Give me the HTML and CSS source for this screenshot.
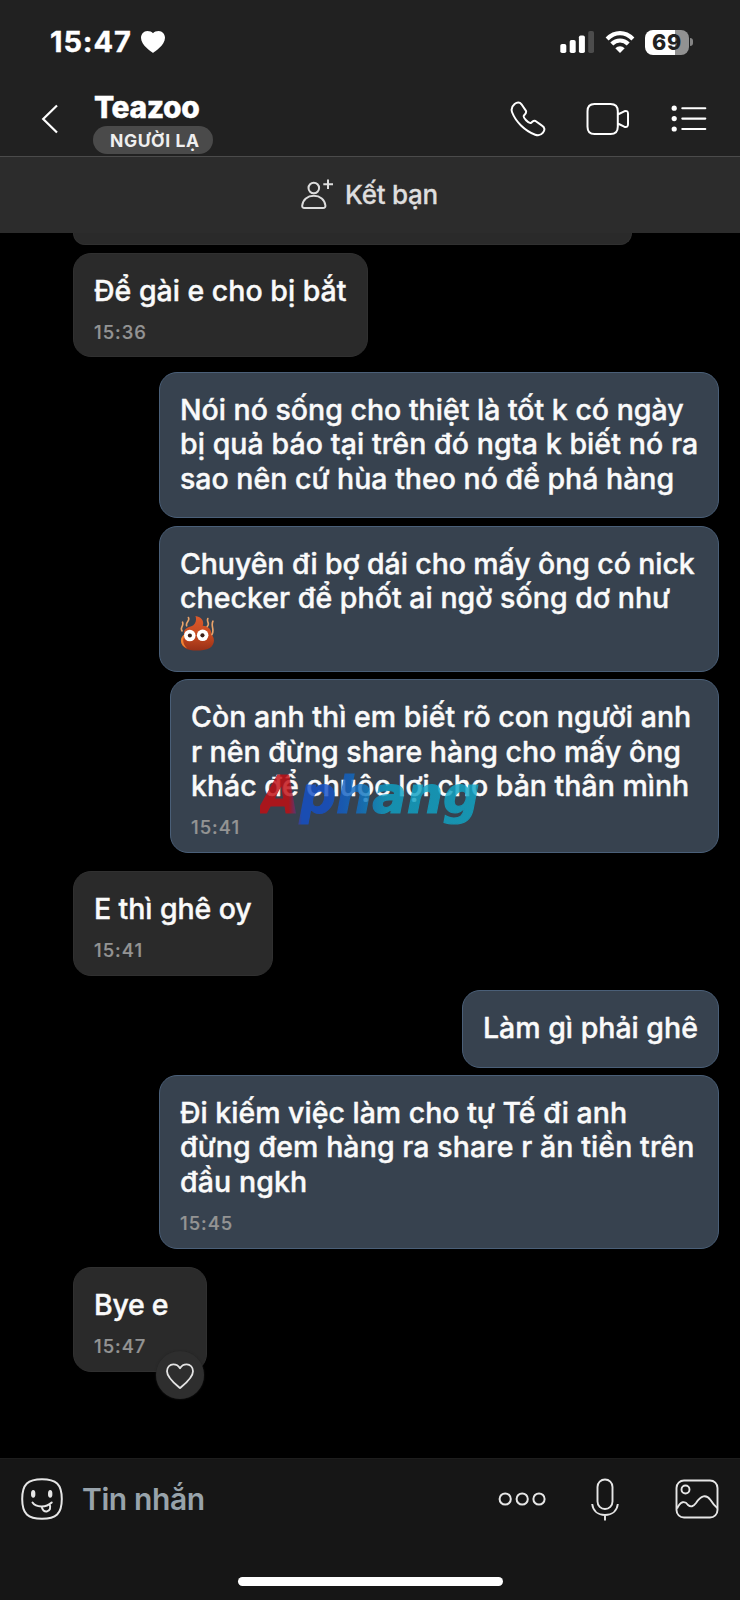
FILE: index.html
```html
<!DOCTYPE html>
<html lang="vi">
<head>
<meta charset="utf-8">
<title>Teazoo</title>
<link rel="stylesheet" href="styles.css">
</head>
<body>
<div class="screen">
  <header class="header">
    <div class="status">
      <span class="clock">15:47</span>
      <svg class="status-heart" width="26" height="24" viewBox="0 0 26 24"><path d="M13 23C11.800 22 1 15.500 1 7.800C1 4 3.800 1 7.300 1C9.700 1 11.900 1.700 13 3.300C14.100 1.700 16.300 1 18.700 1C22.200 1 25 4 25 7.800C25 15.500 14.200 22 13 23Z" fill="#fff"/></svg>
      <svg class="signal" width="34" height="22" viewBox="0 0 34 22"><g fill="#fff"><rect x="0.300" y="13" width="6" height="9" rx="1.800"/><rect x="9.700" y="9" width="6" height="13" rx="1.800"/><rect x="18.900" y="4.500" width="6" height="17.500" rx="1.800"/></g><rect x="28.200" y="0" width="5.800" height="22" rx="1.800" fill="#4c4c4c"/></svg>
      <svg class="wifi" width="30" height="22" viewBox="0 0 30 22"><g fill="none" stroke="#fff" stroke-width="4.200"><path d="M2.100 8Q8 2.200 15 2.200T27.900 8"/><path d="M6.800 13Q10.300 9.500 15 9.500T23.200 13"/></g><path d="M15 22L10.300 17.300Q12.400 15.200 15 15.200T19.700 17.300Z" fill="#fff"/></svg>
      <div class="battery"><span class="battery-box">69</span><span class="battery-cap"></span></div>
    </div>
    <div class="nav">
      <svg class="back" width="20" height="32" viewBox="0 0 20 32"><path d="M17 2.500L3.200 16L17 29.500" fill="none" stroke="#fff" stroke-width="2.200"/></svg>
      <div class="title">
        <h1 class="name">Teazoo</h1>
        <span class="tag">NGƯỜI LẠ</span>
      </div>
      <svg class="call" width="36" height="36" viewBox="0 0 36 36"><path d="M4.600 3C7 1.100 9.700 .9 11.500 3.300L15.800 9.600C17 11.500 15.500 12.800 14 14.400C12.400 16.100 18.800 23.300 21.100 21.800C22.800 20.700 23.300 19.100 25.500 20L32 24.600C35 26.500 35 29.300 33 31.700C30.800 34.400 28.600 35 25.200 33.700C14.500 29.600 5.700 20.500 2.200 11.500C.9 8.200 1.700 5.400 4.600 3Z" fill="none" stroke="#fff" stroke-width="2" stroke-linejoin="round"/></svg>
      <svg class="video" width="44" height="34" viewBox="0 0 44 34"><path d="M8.500 2H24.500Q31.800 2 31.800 9.300V24.700Q31.800 32 24.500 32H8.500Q1.500 32 1.500 24.700V9.300Q1.500 2 8.500 2ZM31.800 12.500L38.200 9.300Q42 8 42 11.800V22.200Q42 26 38.200 24.700L31.800 21.500" fill="none" stroke="#fff" stroke-width="2"/></svg>
      <svg class="menu" width="36" height="28" viewBox="0 0 36 28"><g fill="#fff"><circle cx="3.200" cy="3.200" r="2.600"/><circle cx="3.200" cy="13.600" r="2.600"/><circle cx="3.200" cy="24" r="2.600"/></g><path d="M11.300 3.200H34.300M11.300 13.600H34.300M11.300 24H34.300" stroke="#fff" stroke-width="2.100" stroke-linecap="round"/></svg>
    </div>
  </header>
  <div class="add-friend">
    <svg width="32" height="32" viewBox="0 0 32 32"><g fill="none" stroke="#ddd" stroke-width="2"><circle cx="12.800" cy="9" r="5.300"/><path d="M3.500 29Q1 29 1.200 26.500C1.800 20.500 6.500 16.800 12.800 16.800S23.800 20.500 24.400 26.500Q24.600 29 22 29Z"/><path d="M27 .5V10M22.300 5.200H32"/></g></svg>
    <span class="add-text">Kết bạn</span>
  </div>

  <main class="chat">
    <div class="bubble in cut"></div>
    <div class="bubble in b1"><p>Để gài e cho bị bắt</p><time>15:36</time></div>
    <div class="bubble out wide b2"><p>Nói nó sống cho thiệt là tốt k có ngày</p><p class="loose">bị quả báo tại trên đó ngta k biết nó ra</p><p>sao nên cứ hùa theo nó để phá hàng</p></div>
    <div class="bubble out wide b3"><p class="tight">Chuyên đi bợ dái cho mấy ông có nick</p><p class="slack">checker để phốt ai ngờ sống dơ như</p><p class="emoji-line"><svg width="35" height="35" viewBox="0 0 34 34"><defs><linearGradient id="body" x1="0" y1="0" x2="0" y2="1"><stop offset="0" stop-color="#dc5a2c"/><stop offset=".55" stop-color="#c74a20"/><stop offset="1" stop-color="#983017"/></linearGradient></defs><path d="M15 0C22 1 23.500 6 22 9.500C27 9.500 31 13 30.500 18C34 21 34 28 29 31C22 34.500 10 34.500 5 31C0 28 0 21 4 18C3 14 6 11 11 10C15 8.500 16.500 4 15 0Z" fill="url(#body)"/><path d="M4 18C-1 22 0 29 7 31.500C2.500 27 2 23 5 19Z" fill="#ef8133"/><g fill="none" stroke="#e9a36a" stroke-width="1.600" stroke-linecap="round"><path d="M2 14.500C-.5 11 4 10 2.500 6M6.500 9.500C5 6 10 5 8.200 1.500M26.500 10C29.500 7 25.500 6 27 2.500M31 18C34 13 29.500 10 32 5"/></g><circle cx="9.500" cy="19" r="5.600" fill="#fff"/><circle cx="22" cy="18.800" r="5.600" fill="#fff"/><circle cx="9.600" cy="19" r="2" fill="#3b2019"/><circle cx="21.800" cy="18.800" r="2" fill="#3b2019"/></svg></p></div>
    <div class="bubble out mid b4"><p class="slack">Còn anh thì em biết rõ con người anh</p><p>r nên đừng share hàng cho mấy ông</p><p>khác để chuộc lợi cho bản thân mình</p><time>15:41</time><span class="watermark">Aphang</span></div>
    <div class="bubble in b5"><p class="tight">E thì ghê oy</p><time>15:41</time></div>
    <div class="bubble out b6"><p>Làm gì phải ghê</p></div>
    <div class="bubble out wide b7"><p>Đi kiếm việc làm cho tự Tế đi anh</p><p class="loose">đừng đem hàng ra share r ăn tiền trên</p><p class="loose">đầu ngkh</p><time>15:45</time></div>
    <div class="bubble in b8"><p class="tighter">Bye e</p><time>15:47</time>
      <span class="react"><svg width="28" height="26" viewBox="0 0 28 26"><path d="M14 25C10 21.500 1 15 1 8.200C1 4.200 3.800 1.300 7.300 1.300C10.500 1.300 12.700 3 14 5.200C15.300 3 17.500 1.300 20.700 1.300C24.200 1.300 27 4.200 27 8.200C27 15 18 21.500 14 25Z" fill="none" stroke="#e4e4e4" stroke-width="1.800" stroke-linejoin="round"/></svg></span>
    </div>
  </main>

  <footer class="footer">
    <div class="composer">
      <svg width="42" height="42" viewBox="0 0 42 42"><path d="M21 1.200C35 1.200 40.800 6 40.800 21S35 40.800 21 40.800S1.200 36 1.200 21S7 1.200 21 1.200Z" fill="none" stroke="#e6e6e6" stroke-width="2"/><ellipse cx="12.200" cy="15.900" rx="2.200" ry="3.800" fill="#e6e6e6"/><ellipse cx="29.200" cy="15.900" rx="2.200" ry="3.800" fill="#e6e6e6"/><path d="M11.500 24.500C15 29.600 25 30 30.700 24.500M20.800 28.500C21 32 23.500 33.800 25.800 33.400C29 32.800 30.200 29.500 28.500 26.300" fill="none" stroke="#e6e6e6" stroke-width="2" stroke-linecap="round"/></svg>
      <span class="placeholder">Tin nhắn</span>
      <svg class="more" width="48" height="14" viewBox="0 0 48 14"><g fill="none" stroke="#e6e6e6" stroke-width="2"><circle cx="7.200" cy="7" r="5.600"/><circle cx="24.200" cy="7" r="5.600"/><circle cx="41" cy="7" r="5.600"/></g></svg>
      <svg class="mic" width="28" height="43" viewBox="0 0 28 43"><g fill="none" stroke="#e6e6e6" stroke-width="1.900"><rect x="6.500" y="1.500" width="15" height="29.500" rx="7.500"/><path d="M1.200 26C2 33 7 37 14 37S26 33 26.800 26M14 37V42.500"/></g></svg>
      <svg class="photo" width="44" height="40" viewBox="0 0 44 40"><g fill="none" stroke="#e6e6e6" stroke-width="1.900"><rect x="1.500" y="1.500" width="41" height="37" rx="7.500"/><circle cx="10.500" cy="10.500" r="4"/><path d="M2 29.500C5.500 22 10 21.500 13 26Q17 29.500 21 24C26 16.500 31 15 35.500 21Q39 26.500 42.300 29"/></g></svg>
    </div>
    <div class="home"></div>
  </footer>
</div>
</body>
</html>
```
FILE: styles.css
```css
* { box-sizing: border-box; }
body { margin: 0; background: #000; font-family: Inter, "Noto Sans", sans-serif; }
svg { display: block; flex: none; }
.screen { width: 740px; height: 1600px; display: flex; flex-direction: column; overflow: hidden; background: #000; }

.header { height: 157px; flex: none; background: #212121; border-bottom: 1px solid #4b4b4b; }
.status { display: flex; height: 84px; align-items: center; padding: 0 47px 0 50px; }
.clock { color: #fff; font-size: 29px; font-weight: 700; line-height: 34px; letter-spacing: 0.900px; -webkit-text-stroke: 0.400px #fff; white-space: nowrap; width: 89px; }
.status-heart { margin-left: 1px; }
.signal { margin-left: auto; }
.wifi { margin-left: 11px; }
.battery { display: flex; align-items: center; margin-left: 10px; gap: 1px; }
.battery-box { width: 44px; height: 25px; border-radius: 8px; background: linear-gradient(90deg, #fff 69%, #929292 69%); color: #212121; font-size: 21.500px; font-weight: 800; line-height: 25px; letter-spacing: 0.800px; text-align: center; }
.battery-cap { width: 3px; height: 8px; border-radius: 0 3px 3px 0; background: #858585; }

.nav { display: flex; height: 70px; align-items: center; padding: 0 33px 0 40px; }
.title { display: flex; flex-direction: column; align-items: flex-start; margin-left: 33px; }
.name { margin: 5px 0 0 1px; color: #fff; font-size: 30px; font-weight: 800; line-height: 37px; letter-spacing: -0.400px; -webkit-text-stroke: 0.400px #fff; }
.tag { height: 28px; width: 120px; border-radius: 14px; background: #4a4a4a; color: #efefef; font-size: 17.500px; font-weight: 700; line-height: 30px; padding-left: 17px; letter-spacing: 0.600px; white-space: nowrap; }
.call { margin-left: auto; }
.video { margin-left: 40px; }
.menu { margin-left: 41px; }

.add-friend { display: flex; flex: none; height: 76px; align-items: center; justify-content: center; gap: 12px; padding-right: 1px; background: #2c2c2c; }
.add-text { color: #dedede; font-size: 26px; font-weight: 500; line-height: 32px; letter-spacing: -0.250px; -webkit-text-stroke: 0.300px #dedede; white-space: nowrap; }

.chat { display: flex; flex: none; height: 1225px; flex-direction: column; align-items: flex-start; padding: 0 21px 0 73px; }
.bubble { position: relative; flex: none; border: 1px solid; border-radius: 18px; padding: 19.500px 20px 21px; color: #fafafa; }
.in { background: #2a2a2a; border-color: #303030; }
.out { align-self: flex-end; background: #37424f; border-color: #4a5f78; }
.bubble p { margin: 0; height: 34.500px; font-size: 28.500px; font-weight: 500; line-height: 34.500px; -webkit-text-stroke: 0.400px #fafafa; white-space: nowrap; }
.bubble .tight { letter-spacing: -0.090px; }
.bubble .tighter { letter-spacing: -0.300px; }
.bubble .loose { letter-spacing: 0.090px; }
.bubble .slack { letter-spacing: 0.040px; }
.bubble time { display: block; margin: 12.500px 0 -8px; height: 22px; color: #949494; font-size: 18.500px; font-weight: 500; line-height: 22px; letter-spacing: 1px; -webkit-text-stroke: 0.200px #949494; }
.wide { width: 560px; }
.mid { width: 549px; }
.cut { width: 559px; height: 12px; padding: 0; border-top: 0; border-radius: 0 0 17px 17px; }
.b1 { margin-top: 8px; width: 295px; height: 104px; }
.b2 { margin-top: 15px; height: 146px; }
.b3 { margin-top: 8px; height: 146px; }
.b4 { margin-top: 7px; height: 174px; padding-top: 20px; }
.b5 { margin-top: 18px; width: 200px; height: 105px; }
.b6 { margin-top: 14px; width: 257px; height: 78px; }
.b7 { margin-top: 7px; height: 174px; }
.b8 { margin-top: 18px; width: 134px; height: 105px; }

.watermark { position: absolute; left: 89px; top: 86px; font: italic 700 51px/60px "DejaVu Sans", sans-serif; background: linear-gradient(90deg, #c20d12 13%, #1450c8 19%, #1450c8 31%, #126fc0 45%, #0fa0c4 58%, #10a6c6 100%); -webkit-background-clip: text; background-clip: text; color: transparent; -webkit-text-stroke: 1.200px transparent; opacity: 0.82; }

.react { position: absolute; right: 2px; bottom: -28px; width: 48px; height: 48px; border-radius: 50%; background: #2e2e2e; display: flex; align-items: center; justify-content: center; padding-top: 2px; box-shadow: 0 0 2px #222; }

.footer { flex: 1; background: #161616; border-top: 1px solid #1d1d1d; }
.composer { display: flex; height: 80px; align-items: center; padding: 0 21px; }
.placeholder { margin-left: 19px; color: #98a3ab; font-size: 30px; font-weight: 600; line-height: 36px; letter-spacing: -0.400px; white-space: nowrap; }
.more { margin-left: auto; }
.mic { margin-left: 45px; }
.photo { margin-left: 56px; }
.home { width: 265px; height: 9px; margin: 38px auto 0; border-radius: 5px; background: #fff; }
```
